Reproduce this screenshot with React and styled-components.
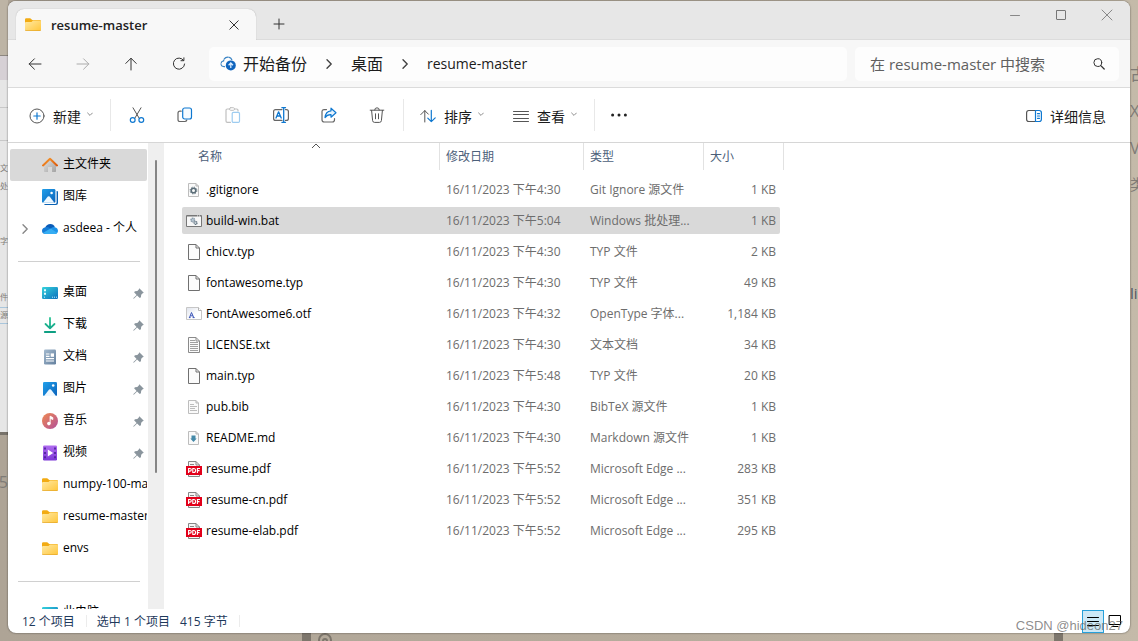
import React from "react";
import styled, { createGlobalStyle } from "styled-components";

const ui = `"Open Sans", "Noto Sans CJK SC", sans-serif`;

const GlobalStyle = createGlobalStyle`
  * { box-sizing: border-box; }
  body { margin: 0; font-family: ${ui}; font-size: 12px; color: #000; overflow: hidden; }
  button, input { font: inherit; color: inherit; }
  svg { display: block; flex: none; }
`;

/* ---------- desktop behind the window ---------- */

const Desktop = styled.div`
  position: relative;
  display: flex;
  height: 100vh;
  padding: 1px 8px 8px;
  overflow: hidden;
  background: linear-gradient(to right, #aea496, #b6ac9c 60%, #c4baa9);
`;

const Behind = styled.div`
  position: absolute;
  top: 0;
  bottom: 0;
  ${(p) => (p.$side === "left" ? "left: 0;" : "right: 0;")}
  width: 8px;
  overflow: hidden;
`;

const Sheet = styled.div`
  position: absolute;
  top: ${(p) => p.$top}px;
  left: 0;
  right: 0;
  height: ${(p) => p.$height}px;
  background: ${(p) => p.$color};
`;

const Fragment = styled.span`
  position: absolute;
  top: ${(p) => p.$top}px;
  ${(p) => (p.$right ? "right: 0;" : "left: 0;")}
  font-size: ${(p) => p.$size}px;
  line-height: 20px;
  white-space: nowrap;
  color: ${(p) => p.$color || "#7f7b76"};
`;

const Below = styled.div`
  position: absolute;
  left: ${(p) => p.$left}px;
  bottom: 0;
  width: 9px;
  height: 9px;
  background: #7d766c;
`;

const Knob = styled.svg`
  position: absolute;
  left: 317px;
  bottom: -6px;
`;

/* ---------- window ---------- */

const Window = styled.main`
  position: relative;
  flex: 1;
  min-width: 0;
  display: flex;
  flex-direction: column;
  overflow: hidden;
  background: #fff;
  border-radius: 8px;
  box-shadow: 0 0 2px rgba(0, 0, 0, 0.6);
`;

const TitleBar = styled.header`
  display: flex;
  flex: none;
  height: 39px;
  padding-left: 8px;
  background: #e7e7e7;
  border-bottom: 1px solid #dcdcdc;
`;

const Tab = styled.div`
  display: flex;
  align-items: center;
  align-self: flex-end;
  width: 240px;
  height: 31px;
  margin-bottom: -1px;
  padding: 0 14px 0 9px;
  background: #f8f8f8;
  border-radius: 8px 8px 0 0;
  box-shadow: 0 0 1px rgba(0, 0, 0, 0.3);
  clip-path: inset(-2px -2px 0 -2px);
`;

const TabTitle = styled.span`
  flex: 1;
  padding-left: 10px;
  font-size: 13px;
  font-weight: 600;
  color: #222;
`;

const PlainButton = styled.button`
  display: flex;
  align-items: center;
  justify-content: center;
  flex: none;
  padding: 0;
  border: 0;
  background: none;
`;

const NewTab = styled(PlainButton)`
  align-self: flex-end;
  width: 30px;
  height: 30px;
  margin-left: 8px;
`;

const WindowControls = styled.div`
  display: flex;
  margin-left: auto;
`;

const WindowControl = styled(PlainButton)`
  width: 46px;
  height: 28px;
`;

const NavBar = styled.nav`
  display: flex;
  align-items: center;
  flex: none;
  height: 48px;
  padding: 0 11px;
  background: #f7f7f7;
  border-bottom: 1px solid #dbdbdb;
`;

const NavButtons = styled.div`
  display: flex;
  gap: 16px;
  margin-right: 14px;
`;

const IconButton = styled(PlainButton)`
  width: 32px;
  height: 32px;
`;

const Address = styled.div`
  display: flex;
  align-items: center;
  gap: 18px;
  flex: 1;
  min-width: 0;
  height: 34px;
  padding: 0 11px;
  background: #fdfdfd;
  border-radius: 5px;
  overflow: hidden;
`;

const Crumb = styled.a`
  display: flex;
  align-items: center;
  gap: 6px;
  font-size: ${(p) => (p.$latin ? 14 : 16)}px;
  line-height: 24px;
  white-space: nowrap;
  color: #1b1b1b;
  text-decoration: none;
`;

const Search = styled.label`
  display: flex;
  align-items: center;
  width: 264px;
  height: 34px;
  margin-left: 8px;
  padding: 0 12px 0 15px;
  background: #fdfdfd;
  border-radius: 5px;
`;

const SearchInput = styled.input`
  flex: 1;
  min-width: 0;
  padding: 0;
  border: 0;
  outline: 0;
  background: none;
  font-size: 15px;
  &::placeholder { color: #606060; opacity: 1; }
`;

const ToolBar = styled.div`
  display: flex;
  align-items: center;
  flex: none;
  height: 55px;
  padding: 0 24px 0 21px;
  border-bottom: 1px solid #d6d6d6;
`;

const ToolButton = styled(PlainButton)`
  gap: 8px;
  height: 32px;
  padding-top: 2px;
  font-size: 14px;
  color: #1b1b1b;
`;

const ToolLabel = styled.span`
  padding-top: 2px;
  line-height: 20px;
`;

const Chevron = styled.span`
  display: flex;
  margin: 0 0 2px -2px;
`;

const ToolDivider = styled.span`
  width: 1px;
  height: 32px;
  margin: ${(p) => p.$margin};
  background: #e8e8e8;
`;

const ToolIcons = styled.div`
  display: flex;
  gap: 16px;
`;

const Views = styled.div`
  display: flex;
  gap: 29px;
`;

const Details = styled(ToolButton)`
  margin-left: auto;
`;

/* ---------- body ---------- */

const Body = styled.div`
  display: flex;
  flex: 1;
  min-height: 0;
`;

const SideBar = styled.aside`
  display: flex;
  flex: none;
  width: 156px;
  overflow: hidden;
`;

const SideList = styled.ul`
  flex: 1;
  min-width: 0;
  margin: 0;
  padding: 6px 1px 0 2px;
  list-style: none;
`;

const SideRow = styled.li`
  display: flex;
  align-items: center;
  height: 32px;
  padding: 0 3px 0 8px;
  border-radius: 2px;
  background: ${(p) => (p.$active ? "#d9d9d9" : "none")};
`;

const Expander = styled.span`
  display: flex;
  flex: none;
  width: 24px;
  padding-left: 3px;
`;

const SideLink = styled.a`
  display: flex;
  align-items: center;
  flex: 1;
  gap: 5px;
  min-width: 0;
  margin-right: ${(p) => (p.$wide ? -3 : 0)}px;
  overflow: hidden;
  white-space: nowrap;
  color: #000;
  text-decoration: none;
`;

const SideName = styled.span`
  padding-bottom: 2px;
  line-height: 20px;
`;

const SideRule = styled.li`
  height: 32px;
  padding: 16px 7px 0 8px;
  &::before { content: ""; display: block; height: 1px; background: #d0d0d0; }
`;

const ScrollTrack = styled.div`
  flex: none;
  width: 16px;
  padding: 17px 7px 0;
  background: #efefef;
`;

const ScrollThumb = styled.div`
  height: 313px;
  border-radius: 1px;
  background: #858585;
`;

const Files = styled.section`
  flex: 1;
  min-width: 0;
  padding-left: 18px;
  overflow: hidden;
`;

const FileTable = styled.table`
  display: block;
  tbody, thead { display: block; }
`;

const HeadRow = styled.tr`
  display: grid;
  grid-template-columns: 258px 144px 120px 80px;
  height: 27px;
  margin-bottom: 6px;
`;

const HeadCell = styled.th`
  position: relative;
  padding: 0 0 0 ${(p) => (p.$first ? 16 : 6)}px;
  border-right: 1px solid #e2e2e2;
  font-weight: 400;
  line-height: 27px;
  text-align: left;
  color: #4c607a;
`;

const SortMark = styled.svg`
  position: absolute;
  top: 0;
  left: 50%;
`;

const FileRow = styled.tr`
  display: grid;
  grid-template-columns: 258px 144px 120px 76px;
  width: 598px;
  height: 27px;
  margin-bottom: 4px;
  border-radius: 2px;
  background: ${(p) => (p.$selected ? "#d9d9d9" : "none")};
`;

const FileCell = styled.td`
  padding: 0 4px 0 6px;
  line-height: 27px;
  color: #6d6d6d;
  white-space: nowrap;
  text-align: ${(p) => (p.$right ? "right" : "left")};
`;

const NameCell = styled(FileCell)`
  display: flex;
  align-items: center;
  gap: 4px;
  padding: 0 4px;
  color: #000;
`;

/* ---------- status bar ---------- */

const StatusBar = styled.footer`
  display: flex;
  align-items: center;
  flex: none;
  height: 24px;
  padding: 0 4px 0 14px;
  color: #1e395b;
`;

const StatusRule = styled.span`
  width: 1px;
  height: 12px;
  margin: 0 10px 0 11px;
  background: #ececec;
`;

const StatusText = styled.span`
  margin-right: ${(p) => (p.$gap ? 10 : 0)}px;
`;

const ViewSwitch = styled.div`
  display: flex;
  margin-left: auto;
`;

const ViewButton = styled(PlainButton)`
  width: 22px;
  height: 23px;
  border: 1px solid ${(p) => (p.$on ? "#26a0da" : "transparent")};
  background: ${(p) => (p.$on ? "#cde8f6" : "none")};
`;

const Watermark = styled.span`
  position: absolute;
  right: 15px;
  bottom: 7px;
  font: 13px/16px "Liberation Sans", sans-serif;
  color: rgba(90, 90, 90, 0.7);
`;

/* ---------- icons ---------- */

const Line = ({ size = 16, color = "#333", children, ...rest }) => (
  <svg width={size} height={size} viewBox="0 0 16 16" fill="none" stroke={color} strokeLinecap="round" strokeLinejoin="round" aria-hidden="true" {...rest}>
    {children}
  </svg>
);
const Pic = ({ children }) => (
  <svg width="16" height="16" viewBox="0 0 16 16" aria-hidden="true">{children}</svg>
);

const FolderIcon = () => (
  <Pic>
    <path d="M0 2.5Q0 1.2 1.3 1.2H5.2L7.3 3H14.7Q16 3 16 4.3V12H0Z" fill="#f2ab13" />
    <path d="M0 6Q0 5 1 5H6.5L8 3.6H14.8Q16 3.6 16 4.7V12.6Q16 14 14.7 14H1.3Q0 14 0 12.6Z" fill="url(#folderFace)" />
    <path d="M0 12.4Q.2 13.5 1.3 13.5H14.7Q15.8 13.5 16 12.4V12.7Q16 14 14.7 14H1.3Q0 14 0 12.7Z" fill="#dc9a1c" />
  </Pic>
);

const HomeIcon = () => (
  <Pic>
    <path d="M2 7.5L8 2L14 7.5V14.3Q14 15 13.3 15H10V10H6V15H2.7Q2 15 2 14.3Z" fill="url(#houseWall)" />
    <path d="M1 8.4L8 1.8L15 8.4" fill="none" stroke="url(#houseRoof)" strokeWidth="2" strokeLinecap="round" strokeLinejoin="round" />
  </Pic>
);

const GalleryIcon = () => (
  <Pic>
    <path d="M14.6 2H15Q16 2 16 3V14Q16 16 14 16H3.5Q2.4 16 2 15H13Q14.6 15 14.6 13.4Z" fill="#0b62b4" />
    <rect width="13.4" height="13.8" rx="1.3" fill="url(#photo)" />
    <circle cx="9.6" cy="4" r="1.3" fill="#fff" />
    <path d="M1 13.8L5.8 7.6Q6.7 6.7 7.6 7.6L12.4 13.8Z" fill="#eef8ff" />
  </Pic>
);

const PhotoIcon = () => (
  <Pic>
    <rect x="1" y="1" width="14" height="14" rx="1.3" fill="url(#photo)" />
    <circle cx="11.2" cy="4.5" r="1.3" fill="#fff" />
    <path d="M2 15L7.1 8.6Q8 7.7 8.9 8.6L14 15Z" fill="#eef8ff" />
  </Pic>
);

const CloudIcon = () => (
  <Pic>
    <path d="M3.2 6.6Q4.7 3 8.3 3Q11.7 3 12.9 6.3L8.2 9Z" fill="#0b5cb8" />
    <path d="M3.5 6.2Q6 5.8 8.3 7.4L12.6 13H3.8Q0 13 0 9.7Q0 6.7 3.5 6.2Z" fill="#157bd6" />
    <path d="M8.6 7.6Q10.5 5.6 12.8 6.2Q16 6.9 16 10Q15.7 13 12.7 13Z" fill="#1c92e8" />
    <path d="M1.2 11.8L8.5 7.4L15.2 11.7Q14.4 13 12.7 13H3.8Q2 13 1.2 11.8Z" fill="#35adf3" />
  </Pic>
);

const DesktopIcon = () => (
  <Pic>
    <rect y="2" width="16" height="12" rx="1.2" fill="url(#screen)" />
    <path d="M2 4.3h2v2H2zM2 7.7h2v2H2z" fill="#e9fdff" />
    <path d="M2 12.2h1M10 12.2h1M12 12.2h1M14 12.2h1" stroke="#bfefff" />
  </Pic>
);

const DownloadIcon = () => (
  <Pic>
    <path d="M8 1V11M3.5 7L8 11.4L12.5 7" fill="none" stroke="url(#down)" strokeWidth="1.8" strokeLinecap="round" strokeLinejoin="round" />
    <path d="M2.8 15H13.2" stroke="#0e9f83" strokeWidth="1.8" strokeLinecap="round" />
  </Pic>
);

const DocumentIcon = () => (
  <Pic>
    <rect x="2" y="0.5" width="12" height="15" rx="1.2" fill="url(#paper)" />
    <path d="M4 5h3.5M4 7.3h3.5M4 9.7h8M4 12h8" stroke="#fff" strokeWidth="1.2" />
    <rect x="8.7" y="4.4" width="3.3" height="3.4" fill="#fff" />
  </Pic>
);

const MusicIcon = () => (
  <Pic>
    <circle cx="8" cy="8" r="8" fill="url(#disc)" />
    <circle cx="6.9" cy="10.6" r="1.8" fill="#fff" />
    <path d="M8.1 10.6V3.2L10.8 4.6V6.5L8.5 5.4" fill="#fff" stroke="#fff" strokeWidth=".9" />
  </Pic>
);

const VideoIcon = () => (
  <Pic>
    <rect x="1" y="0.5" width="14" height="15" rx="1.2" fill="url(#film)" />
    <path d="M3 2.6v2M3 6.9v2M3 11.2v2M13 2.6v2M13 6.9v2M13 11.2v2" stroke="#4c2298" strokeWidth="1.7" />
    <path d="M5.8 4.4L11.2 8L5.8 11.6Z" fill="#fff" />
  </Pic>
);

const PinIcon = () => (
  <svg width="11" height="11" viewBox="0 0 11 11" aria-hidden="true">
    <path d="M6.3.2L10.8 4.7L9.7 5.3L8.2 6.8L7.9 9.2L6.8 10L4.1 7.4L.8 10.8L.2 10.2L3.6 6.9L1.1 4.3L2 3.2L4.3 2.9L5.8 1.4Z" fill="#8a959d" />
  </svg>
);

const Page = ({ children, stroke = "#707070" }) => (
  <Pic>
    <path d="M2.5.5H10L13.5 4V15.5H2.5Z" fill="#fbfbfb" stroke={stroke} />
    <path d="M10 .5V4H13.5" fill="none" stroke={stroke} />
    {children}
  </Pic>
);
const SmallPage = ({ children }) => (
  <Pic>
    <path d="M2.5 1.5H10L12.5 4V14.5H2.5Z" fill="#fafafa" stroke="#bdbdbd" />
    <path d="M10 1.5V4H12.5" fill="none" stroke="#b5b5b5" />
    {children}
  </Pic>
);

const fileIcons = {
  page: <Page />,
  text: (
    <Page stroke="#8a8a8a">
      <path d="M4 3.5h5M4 5.5h8M4 7.5h8M4 9.5h8M4 11.5h8M4 13.5h8" stroke="#a0a0a0" />
    </Page>
  ),
  gear: (
    <SmallPage>
      <circle cx="7.5" cy="8.5" r="2.3" fill="none" stroke="#5b6d78" strokeWidth="1.6" />
      <circle cx="7.5" cy="8.5" r="3.4" fill="none" stroke="#5b6d78" strokeWidth="1" strokeDasharray="1.3 1.37" />
    </SmallPage>
  ),
  bib: (
    <SmallPage>
      <path d="M4 5.5h4M4 7.5h7M4 9.5h5M4 11.5h7" stroke="#bcbcbc" />
    </SmallPage>
  ),
  mark: (
    <SmallPage>
      <path d="M5.5 5.5H9.5V8.5H10.7L7.5 12L4.3 8.5H5.5Z" fill="#4589a8" />
    </SmallPage>
  ),
  bat: (
    <Pic>
      <path d="M.5 2.5H15.5V13.5H.5Z" fill="#f7f7f7" stroke="#777" />
      <path d="M1 3H15" stroke="#777" />
      <path d="M11 3h1M13 3h1" stroke="#eee" />
      <circle cx="6.8" cy="7" r="1.8" fill="#b9c6d0" stroke="#8a9cab" strokeWidth="1.5" strokeDasharray="1.3 .4" />
      <circle cx="9.6" cy="10" r="1.4" fill="#dfe8ee" stroke="#5a6c7a" strokeWidth="1.2" strokeDasharray="1.2 .4" />
    </Pic>
  ),
  font: (
    <Pic>
      <path d="M.5 1.5H12.5L15.5 4.5V13.5H.5Z" fill="url(#fontPage)" stroke="#c6c6c6" />
      <path d="M12.5 1.5V4.5H15.5" fill="#fff" stroke="#b4b4b4" />
      <path d="M3.5 11.5L5.5 6.5L7.7 11.5M4.3 9.8H6.9M2.9 11.6h1.7M6.6 11.6h2" fill="none" stroke="#3b55b8" />
    </Pic>
  ),
  pdf: (
    <Pic>
      <path d="M2.5.5H10L13.5 4V15.5H2.5Z" fill="#f5f5f5" stroke="#868686" />
      <path d="M10 .5V4H13.5M4 3.5h4" fill="none" stroke="#868686" />
      <rect y="5" width="16" height="9" fill="#e2001a" />
      <path d="M2.6 12V7.5H4Q5.3 7.5 5.3 8.8Q5.3 10.1 4 10.1H2.8M6.8 7.5V11.5H7.7Q9.6 11.5 9.6 9.5Q9.6 7.5 7.7 7.5ZM11.4 12V7.5H14M11.4 9.6H13.5" fill="none" stroke="#fff" strokeWidth="1.1" />
    </Pic>
  ),
};

const Defs = () => (
  <svg width="0" height="0" style={{ position: "absolute" }} aria-hidden="true">
    <defs>
      <linearGradient id="folderFace" x1="0" y1="0" x2="1" y2="1"><stop stopColor="#ffe9a4" /><stop offset="1" stopColor="#ffc63a" /></linearGradient>
      <linearGradient id="houseWall" x1="0" y1="0" x2="1" y2="1"><stop stopColor="#e2e2e2" /><stop offset="1" stopColor="#a3a3a3" /></linearGradient>
      <linearGradient id="houseRoof" x1="0" y1="0" x2="1" y2="1"><stop stopColor="#f79a2e" /><stop offset="1" stopColor="#dd5a0c" /></linearGradient>
      <linearGradient id="photo" x1="0" y1="0" x2="1" y2="1"><stop stopColor="#21a0ea" /><stop offset="1" stopColor="#0a62bb" /></linearGradient>
      <linearGradient id="screen" x1="0" y1="0" x2="1" y2="1"><stop stopColor="#35d3dc" /><stop offset="1" stopColor="#0b6ebd" /></linearGradient>
      <linearGradient id="down" x1="0" y1="0" x2="0" y2="16" gradientUnits="userSpaceOnUse"><stop stopColor="#2cc695" /><stop offset="1" stopColor="#0c9d88" /></linearGradient>
      <linearGradient id="paper" x1="0" y1="0" x2="1" y2="1"><stop stopColor="#a4bacf" /><stop offset="1" stopColor="#64809e" /></linearGradient>
      <linearGradient id="disc" x1="0" y1="0" x2="1" y2="1"><stop stopColor="#f08a50" /><stop offset="1" stopColor="#b14f9b" /></linearGradient>
      <linearGradient id="film" x1="0" y1="0" x2="0" y2="1"><stop stopColor="#b06cf0" /><stop offset="1" stopColor="#7b36d6" /></linearGradient>
      <linearGradient id="fontPage" x1="0" y1="0" x2="1" y2="1"><stop stopColor="#dfe3ec" /><stop offset=".6" stopColor="#fff" /></linearGradient>
    </defs>
  </svg>
);

const blue = "#0f78d0";
const ChevronRight = ({ color = "#444" }) => (
  <svg width="8" height="12" viewBox="0 0 8 12" fill="none" stroke={color} strokeWidth="1.4" strokeLinecap="round" strokeLinejoin="round" aria-hidden="true">
    <path d="M2 1.8L6.2 6L2 10.2" />
  </svg>
);
const ChevronDown = () => (
  <Chevron>
    <svg width="6" height="6" viewBox="0 0 6 6" fill="none" stroke="#8c8c8c" strokeLinecap="round" aria-hidden="true">
      <path d="M.6 1L3 3.4L5.4 1" />
    </svg>
  </Chevron>
);

const tools = [
  ["剪切", <Line color="#555">
    <path d="M4 .8L10.4 11.6M12 .8L5.6 11.6" />
    <g stroke={blue} strokeWidth="1.2"><circle cx="3.7" cy="13" r="2.4" /><circle cx="12.3" cy="13" r="2.4" /></g>
  </Line>],
  ["复制", <Line color="#666">
    <path d="M4.2 4.2H3Q1 4.2 1 6.2V12.4Q1 14.5 3 14.5H7.8Q9.4 14.5 9.8 13" strokeWidth="1.2" />
    <rect x="5.7" y="1" width="8.8" height="11" rx="2" stroke={blue} strokeWidth="1.2" fill="#f6fbff" />
  </Line>],
  ["粘贴", <Line color="#c0c0c0">
    <path d="M4.5 2H2.3Q1 2 1 3.3V14Q1 15.3 2.3 15.3H5.5M9.5 2H11.7Q13 2 13 3.3V4" strokeWidth="1.2" />
    <rect x="4.5" y=".7" width="5" height="2.6" rx="1.2" />
    <rect x="7.2" y="5.4" width="7.3" height="10" rx="1.2" stroke="#9dccf0" strokeWidth="1.2" />
  </Line>],
  ["重命名", <Line color="#666">
    <path d="M9 2.6H2.6Q.6 2.6 .6 4.6V11.4Q.6 13.4 2.6 13.4H9M12.5 2.6H13.4Q15.4 2.6 15.4 4.6V11.4Q15.4 13.4 13.4 13.4H12.5" strokeWidth="1.2" />
    <path d="M3 11L5.6 4.8L8.2 11M3.9 9H7.3M10.7 .8V15.2M8.9 .7H12.5M8.9 15.3H12.5" stroke={blue} strokeWidth="1.3" />
  </Line>],
  ["共享", <Line color="#666">
    <path d="M5.5 2.6H3.2Q1 2.6 1 4.8V12.8Q1 15 3.2 15H11.3Q13.5 15 13.5 12.8V11.5" strokeWidth="1.2" />
    <path d="M10 1.2L15 5.7L10 10.2V7.6Q6.3 7.4 4 10.6Q4.6 4.3 10 3.8Z" stroke={blue} strokeWidth="1.2" fill="#e6f3fd" />
  </Line>],
  ["删除", <Line color="#555">
    <path d="M1.2 3.2H14.8M5.7 3Q5.7 .8 8 .8Q10.3 .8 10.3 3M2.6 3.4L3.6 13.6Q3.8 15.4 5.5 15.4H10.5Q12.2 15.4 12.4 13.6L13.4 3.4M6.5 6.8V11.8M9.5 6.8V11.8" />
  </Line>],
];

const SyncIcon = () => (
  <svg width="17" height="17" viewBox="0 0 17 17" fill="none" aria-hidden="true">
    <path d="M4.6 11.7H4Q1 11.6 1 8.8Q1.1 6.3 3.6 5.9Q4.3 2.2 7.8 2.1Q10.8 2.2 11.8 4.7" stroke="#3b84c4" strokeWidth="1.2" strokeLinecap="round" strokeDasharray="4.5 1.2" />
    <circle cx="10.8" cy="10.4" r="5" fill="#0f64bd" />
    <path d="M10.8 13V8.2M8.6 10.2L10.8 8L13 10.2" stroke="#d7ebff" strokeWidth="1.3" />
  </svg>
);

/* ---------- data ---------- */

const sideItems = [
  { name: "主文件夹", icon: <HomeIcon />, active: true },
  { name: "图库", icon: <GalleryIcon /> },
  { name: "asdeea - 个人", icon: <CloudIcon />, expand: true },
  { rule: true },
  { name: "桌面", icon: <DesktopIcon />, pin: true },
  { name: "下载", icon: <DownloadIcon />, pin: true },
  { name: "文档", icon: <DocumentIcon />, pin: true },
  { name: "图片", icon: <PhotoIcon />, pin: true },
  { name: "音乐", icon: <MusicIcon />, pin: true },
  { name: "视频", icon: <VideoIcon />, pin: true },
  { name: "numpy-100-master", icon: <FolderIcon /> },
  { name: "resume-master", icon: <FolderIcon /> },
  { name: "envs", icon: <FolderIcon /> },
  { rule: true },
  { name: "此电脑", icon: <DesktopIcon /> },
];

const files = [
  ["gear", ".gitignore", "4:30", "Git Ignore 源文件", "1 KB"],
  ["bat", "build-win.bat", "5:04", "Windows 批处理...", "1 KB"],
  ["page", "chicv.typ", "4:30", "TYP 文件", "2 KB"],
  ["page", "fontawesome.typ", "4:30", "TYP 文件", "49 KB"],
  ["font", "FontAwesome6.otf", "4:32", "OpenType 字体...", "1,184 KB"],
  ["text", "LICENSE.txt", "4:30", "文本文档", "34 KB"],
  ["page", "main.typ", "5:48", "TYP 文件", "20 KB"],
  ["bib", "pub.bib", "4:30", "BibTeX 源文件", "1 KB"],
  ["mark", "README.md", "4:30", "Markdown 源文件", "1 KB"],
  ["pdf", "resume.pdf", "5:52", "Microsoft Edge ...", "283 KB"],
  ["pdf", "resume-cn.pdf", "5:52", "Microsoft Edge ...", "351 KB"],
  ["pdf", "resume-elab.pdf", "5:52", "Microsoft Edge ...", "295 KB"],
];

export default function App() {
  return (
    <Desktop>
      <GlobalStyle />
      <Defs />
      <Behind $side="left" aria-hidden="true">
        <Sheet $top={0} $height={55} $color="#bdb4a5" />
        <Sheet $top={55} $height={1} $color="#8d8780" />
        <Sheet $top={56} $height={24} $color="#d6d0d5" />
        <Sheet $top={80} $height={352} $color="#e6e6e6" />
        <Sheet $top={107} $height={1} $color="#c8c8c8" />
        <Sheet $top={140} $height={1} $color="#c8c8c8" />
        <Sheet $top={307} $height={1} $color="#a9c6dc" />
        <Sheet $top={323} $height={1} $color="#a9c6dc" />
        <Sheet $top={432} $height={3} $color="#77726a" />
        <Fragment $top={158} $size={8} $right>源文</Fragment>
        <Fragment $top={176} $size={8} $right>处</Fragment>
        <Fragment $top={231} $size={8}>字体</Fragment>
        <Fragment $top={287} $size={8} $right>文件</Fragment>
        <Fragment $top={305} $size={8}>源</Fragment>
        <Fragment $top={472} $size={16} $right>5</Fragment>
      </Behind>
      <Behind $side="right" aria-hidden="true">
        <Fragment $top={64} $size={16}>古</Fragment>
        <Fragment $top={101} $size={16}>X</Fragment>
        <Fragment $top={138} $size={16}>V</Fragment>
        <Fragment $top={174} $size={15}>类</Fragment>
        <Fragment $top={283} $size={15} $color="#4f5665">li</Fragment>
      </Behind>
      <Below $left={302} />
      <Below $left={1054} />
      <Knob width="16" height="16" viewBox="0 0 16 16" fill="none" stroke="#7d766c" strokeWidth="2" aria-hidden="true">
        <circle cx="8" cy="9" r="6" />
        <path d="M8 0V4M6 10a2 2 0 0 1 4 0" />
      </Knob>

      <Window>
        <TitleBar>
          <Tab>
            <FolderIcon />
            <TabTitle>resume-master</TabTitle>
            <PlainButton aria-label="关闭标签页">
              <Line size={16} color="#333"><path d="M3.8 3.8L12.2 12.2M12.2 3.8L3.8 12.2" /></Line>
            </PlainButton>
          </Tab>
          <NewTab aria-label="新建标签页">
            <Line color="#333"><path d="M8 3V13M3 8H13" /></Line>
          </NewTab>
          <WindowControls>
            <WindowControl aria-label="最小化"><Line color="#888"><path d="M3.5 8.5H12.5" /></Line></WindowControl>
            <WindowControl aria-label="最大化"><Line color="#777"><rect x="3.5" y="3.5" width="9" height="9" rx=".5" /></Line></WindowControl>
            <WindowControl aria-label="关闭"><Line color="#888"><path d="M3 3L13 13M13 3L3 13" /></Line></WindowControl>
          </WindowControls>
        </TitleBar>

        <NavBar>
          <NavButtons>
            <IconButton aria-label="后退"><Line><path d="M14 8H2.2M7.4 2.8L2.2 8L7.4 13.2" /></Line></IconButton>
            <IconButton aria-label="前进"><Line color="#ababab"><path d="M2 8H13.8M8.6 2.8L13.8 8L8.6 13.2" /></Line></IconButton>
            <IconButton aria-label="向上"><Line><path d="M8 14V2.4M2.8 7.4L8 2.2L13.2 7.4" /></Line></IconButton>
            <IconButton aria-label="刷新"><Line><path d="M12.6 4.4A5.6 5.6 0 1 0 13.6 8M12.9 1.8V4.7H10" /></Line></IconButton>
          </NavButtons>
          <Address>
            <Crumb href="#backup"><SyncIcon />开始备份</Crumb>
            <ChevronRight />
            <Crumb href="#desktop">桌面</Crumb>
            <ChevronRight />
            <Crumb href="#resume-master" $latin>resume-master</Crumb>
          </Address>
          <Search>
            <SearchInput type="text" aria-label="搜索" placeholder="在 resume-master 中搜索" />
            <Line><circle cx="6.8" cy="6.6" r="3.9" /><path d="M9.8 9.6L13.2 13" strokeWidth="1.3" /></Line>
          </Search>
        </NavBar>

        <ToolBar>
          <ToolButton>
            <Line color="#555"><circle cx="8" cy="8" r="7" /><path d="M8 4.8V11.2M4.8 8H11.2" stroke={blue} strokeWidth="1.2" /></Line>
            <ToolLabel>新建</ToolLabel>
            <ChevronDown />
          </ToolButton>
          <ToolDivider $margin="0 10px 0 17px" />
          <ToolIcons>
            {tools.map(([name, icon]) => (
              <IconButton key={name} aria-label={name}>{icon}</IconButton>
            ))}
          </ToolIcons>
          <ToolDivider $margin="0 16px 0 10px" />
          <Views>
            <ToolButton>
              <Line color="#555"><path d="M4.8 14V2.6M.8 6.6L4.8 2.6L8.4 6.2" /><path d="M11.3 2.4V13.6M7.8 10.2L11.3 13.7L15.2 9.8" stroke={blue} strokeWidth="1.2" /></Line>
              <ToolLabel>排序</ToolLabel>
              <ChevronDown />
            </ToolButton>
            <ToolButton>
              <Line color="#555"><path d="M.5 3.5H15.5M.5 6.5H15.5M.5 10.5H15.5M.5 13.5H15.5" /></Line>
              <ToolLabel>查看</ToolLabel>
              <ChevronDown />
            </ToolButton>
          </Views>
          <ToolDivider $margin="0 8px 0 17px" />
          <IconButton aria-label="更多">
            <svg width="18" height="16" viewBox="0 0 18 16" fill="#222" aria-hidden="true"><circle cx="2.6" cy="8" r="1.5" /><circle cx="9" cy="8" r="1.5" /><circle cx="15.4" cy="8" r="1.5" /></svg>
          </IconButton>
          <Details>
            <Line color="#555">
              <path d="M9.5 2.5H2.8Q.6 2.5 .6 4.7V11.3Q.6 13.5 2.8 13.5H9.5" strokeWidth="1.2" />
              <path d="M9.5 2.5H13.2Q15.4 2.5 15.4 4.7V11.3Q15.4 13.5 13.2 13.5H9.5ZM11.5 5.7H13.5M11.5 8H13.5M11.5 10.3H13.5" stroke={blue} strokeWidth="1.2" />
            </Line>
            <ToolLabel>详细信息</ToolLabel>
          </Details>
        </ToolBar>

        <Body>
          <SideBar>
            <SideList>
              {sideItems.map((it, i) =>
                it.rule ? (
                  <SideRule key={i} role="separator" />
                ) : (
                  <SideRow key={i} $active={it.active}>
                    <Expander>{it.expand && <ChevronRight color="#888" />}</Expander>
                    <SideLink href="#" $wide={!it.pin}>
                      {it.icon}
                      <SideName>{it.name}</SideName>
                    </SideLink>
                    {it.pin && <PinIcon />}
                  </SideRow>
                )
              )}
            </SideList>
            <ScrollTrack><ScrollThumb /></ScrollTrack>
          </SideBar>

          <Files>
            <FileTable cellSpacing="0">
              <thead>
                <HeadRow>
                  <HeadCell $first>
                    名称
                    <SortMark width="10" height="6" viewBox="0 0 10 6" fill="none" stroke="#555" aria-hidden="true"><path d="M1 5L5 1L9 5" /></SortMark>
                  </HeadCell>
                  <HeadCell>修改日期</HeadCell>
                  <HeadCell>类型</HeadCell>
                  <HeadCell>大小</HeadCell>
                </HeadRow>
              </thead>
              <tbody>
                {files.map(([icon, name, time, type, size]) => (
                  <FileRow key={name} $selected={name === "build-win.bat"}>
                    <NameCell>{fileIcons[icon]}{name}</NameCell>
                    <FileCell>16/11/2023 下午{time}</FileCell>
                    <FileCell>{type}</FileCell>
                    <FileCell $right>{size}</FileCell>
                  </FileRow>
                ))}
              </tbody>
            </FileTable>
          </Files>
        </Body>

        <StatusBar>
          <StatusText>12 个项目</StatusText>
          <StatusRule />
          <StatusText $gap>选中 1 个项目</StatusText>
          <StatusText>415 字节</StatusText>
          <StatusRule />
          <ViewSwitch>
            <ViewButton $on aria-label="详细信息视图">
              <Line color="#000"><path d="M2.5 4.5H13.5M2.5 8.5H13.5M2.5 12.5H13.5" /></Line>
            </ViewButton>
            <ViewButton aria-label="大图标视图">
              <Line color="#000"><rect x="2.5" y="2.5" width="11" height="9" /><path d="M5 13.5H11" /></Line>
            </ViewButton>
          </ViewSwitch>
        </StatusBar>
      </Window>
      <Watermark>CSDN @hideon27</Watermark>
    </Desktop>
  );
}
